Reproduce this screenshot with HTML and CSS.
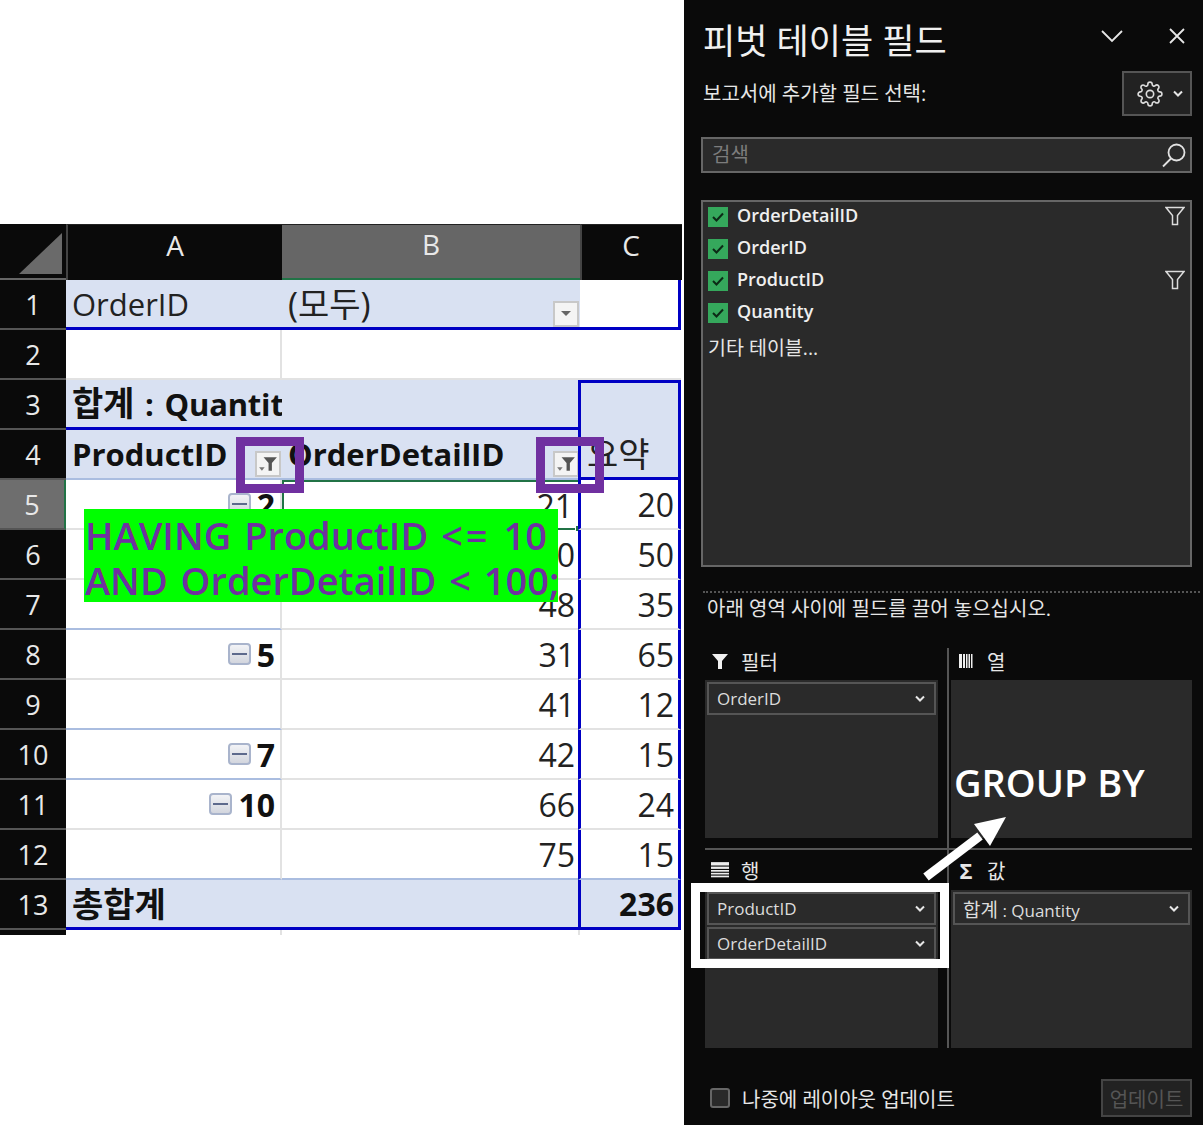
FILE: index.html
```html
<!DOCTYPE html>
<html lang="ko">
<head>
    <meta charset="UTF-8">
    <meta name="viewport" content="width=device-width, initial-scale=1.0">
    <title>피벗 테이블 필드</title>
    <link rel="stylesheet" href="styles.css">
</head>
<body>
    <main class="left">
        <div class="sheet">
            <div class="corner"><svg width="66" height="56" viewBox="0 0 66 56"><polygon points="19,50 62,9 62,50" fill="#6a6a6a"/></svg></div>
            <div class="col-head">A</div>
            <div class="col-head col-on">B</div>
            <div class="col-head col-c">C</div>

            <div class="row-head">1</div>
            <div class="cell tint blue-b">OrderID</div>
            <div class="cell tint blue-b split"><span class="ko">(모두)</span><span class="drop"><svg width="12" height="7" viewBox="0 0 12 7"><polygon points="1,1 11,1 6,6" fill="#666"/></svg></span></div>
            <div class="cell cc blue-b blue-r"></div>

            <div class="row-head">2</div>
            <div class="cell grid-b grid-r"></div>
            <div class="cell grid-b"></div>
            <div class="cell cc grid-b"></div>

            <div class="row-head">3</div>
            <div class="cell tint blue-b bold spaced"><span><span class="ko">합계</span> : Quantit</span></div>
            <div class="cell tint blue-b"></div>
            <div class="cell cc tint blue-t blue-l blue-r"></div>

            <div class="row-head">4</div>
            <div class="cell tint soft-b bold split">ProductID<span class="drop"><svg width="20" height="16" viewBox="0 0 18 14"><polygon points="5,1 17,1 12.5,6 12.5,13 9.5,13 9.5,6" fill="#555"/><polygon points="1,10 6,10 3.5,13" fill="#777"/></svg></span></div>
            <div class="cell tint soft-b bold split">OrderDetailID<span class="drop"><svg width="20" height="16" viewBox="0 0 18 14"><polygon points="5,1 17,1 12.5,6 12.5,13 9.5,13 9.5,6" fill="#555"/><polygon points="1,10 6,10 3.5,13" fill="#777"/></svg></span></div>
            <div class="cell cc tint blue-b blue-l blue-r"><span class="ko">요약</span></div>

            <div class="row-head row-on">5</div>
            <div class="cell num grid-b grid-r"><span class="minus"></span><b>2</b></div>
            <div class="cell num picked">21<span class="handle"></span></div>
            <div class="cell cc num grid-b blue-l blue-r">20</div>

            <div class="row-head">6</div>
            <div class="cell num grid-b grid-r"></div>
            <div class="cell num grid-b">30</div>
            <div class="cell cc num grid-b blue-l blue-r">50</div>

            <div class="row-head">7</div>
            <div class="cell num soft-b grid-r"></div>
            <div class="cell num grid-b">48</div>
            <div class="cell cc num grid-b blue-l blue-r">35</div>

            <div class="row-head">8</div>
            <div class="cell num grid-b grid-r"><span class="minus"></span><b>5</b></div>
            <div class="cell num grid-b">31</div>
            <div class="cell cc num grid-b blue-l blue-r">65</div>

            <div class="row-head">9</div>
            <div class="cell num soft-b grid-r"></div>
            <div class="cell num grid-b">41</div>
            <div class="cell cc num grid-b blue-l blue-r">12</div>

            <div class="row-head">10</div>
            <div class="cell num soft-b grid-r"><span class="minus"></span><b>7</b></div>
            <div class="cell num grid-b">42</div>
            <div class="cell cc num grid-b blue-l blue-r">15</div>

            <div class="row-head">11</div>
            <div class="cell num grid-b grid-r"><span class="minus"></span><b>10</b></div>
            <div class="cell num grid-b">66</div>
            <div class="cell cc num grid-b blue-l blue-r">24</div>

            <div class="row-head">12</div>
            <div class="cell num soft-b grid-r"></div>
            <div class="cell num soft-b">75</div>
            <div class="cell cc num soft-b blue-l blue-r">15</div>

            <div class="row-head">13</div>
            <div class="cell tint blue-b bold total-label"><span class="ko">총합계</span></div>
            <div class="cell cc num tint blue-b blue-l blue-r"><b>236</b></div>

            <div class="row-head stub"></div>
            <div class="cell stub grid-r"></div>
            <div class="cell stub grid-r"></div>
            <div class="cell stub"></div>

            <span class="mark mark-a"></span>
            <span class="mark mark-b"></span>
            <div class="having">HAVING ProductID <span class="op">&lt;=</span> 10
AND OrderDetailID &lt; 100;</div>
        </div>
    </main>

    <aside class="panel">
        <header class="panel-top">
            <h1>피벗 테이블 필드</h1>
            <div class="top-icons">
                <svg width="22" height="14" viewBox="0 0 22 14"><path d="M1 2 L11 12 L21 2" fill="none" stroke="#e6e6e6" stroke-width="1.8"/></svg>
                <svg width="18" height="18" viewBox="0 0 18 18"><path d="M2 2 L16 16 M16 2 L2 16" fill="none" stroke="#e6e6e6" stroke-width="1.8"/></svg>
            </div>
        </header>

        <div class="sub-row">
            <span class="sub-text">보고서에 추가할 필드 선택:</span>
            <div class="gear-btn">
                <svg width="26" height="26" viewBox="0 0 24 24" fill="none" stroke="#dcdcdc" stroke-width="1.5"><circle cx="12" cy="12" r="3.4"/><path d="M19.4 15a1.65 1.65 0 0 0 .33 1.82l.06.06a2 2 0 0 1 0 2.83 2 2 0 0 1-2.83 0l-.06-.06a1.65 1.65 0 0 0-1.82-.33 1.65 1.65 0 0 0-1 1.51V21a2 2 0 0 1-2 2 2 2 0 0 1-2-2v-.09A1.65 1.65 0 0 0 9 19.4a1.65 1.65 0 0 0-1.82.33l-.06.06a2 2 0 0 1-2.83 0 2 2 0 0 1 0-2.83l.06-.06a1.65 1.65 0 0 0 .33-1.82 1.65 1.65 0 0 0-1.51-1H3a2 2 0 0 1-2-2 2 2 0 0 1 2-2h.09A1.65 1.65 0 0 0 4.6 9a1.65 1.65 0 0 0-.33-1.82l-.06-.06a2 2 0 0 1 0-2.83 2 2 0 0 1 2.83 0l.06.06a1.65 1.65 0 0 0 1.82.33H9a1.65 1.65 0 0 0 1-1.51V3a2 2 0 0 1 2-2 2 2 0 0 1 2 2v.09a1.65 1.65 0 0 0 1 1.51 1.65 1.65 0 0 0 1.82-.33l.06-.06a2 2 0 0 1 2.83 0 2 2 0 0 1 0 2.83l-.06.06a1.65 1.65 0 0 0-.33 1.82V9a1.65 1.65 0 0 0 1.51 1H21a2 2 0 0 1 2 2 2 2 0 0 1-2 2h-.09a1.65 1.65 0 0 0-1.51 1z"/></svg>
                <svg class="chev" width="10" height="7" viewBox="0 0 10 7"><path d="M1 1.5 L5 5.5 L9 1.5" fill="none" stroke="#e6e6e6" stroke-width="2"/></svg>
            </div>
        </div>

        <div class="search">
            <span class="search-text">검색</span>
            <svg width="26" height="26" viewBox="0 0 26 26" fill="none" stroke="#e2e2e2" stroke-width="1.8"><circle cx="15.5" cy="10.5" r="8"/><path d="M10 16.5 L2 24.5"/></svg>
        </div>

        <div class="field-list">
            <div class="field"><span class="check"><svg width="14" height="12" viewBox="0 0 14 12"><path d="M2 6 L5.5 9.5 L12 2.5" fill="none" stroke="#0c2a16" stroke-width="2"/></svg></span><span class="field-name">OrderDetailID</span><svg class="funnel" width="20" height="20" viewBox="0 0 20 20"><path d="M1 1.5 H19 L12.5 9.5 V18.5 H7.5 V9.5 Z" fill="none" stroke="#dcdcdc" stroke-width="1.5"/></svg></div>
            <div class="field"><span class="check"><svg width="14" height="12" viewBox="0 0 14 12"><path d="M2 6 L5.5 9.5 L12 2.5" fill="none" stroke="#0c2a16" stroke-width="2"/></svg></span><span class="field-name">OrderID</span></div>
            <div class="field"><span class="check"><svg width="14" height="12" viewBox="0 0 14 12"><path d="M2 6 L5.5 9.5 L12 2.5" fill="none" stroke="#0c2a16" stroke-width="2"/></svg></span><span class="field-name">ProductID</span><svg class="funnel" width="20" height="20" viewBox="0 0 20 20"><path d="M1 1.5 H19 L12.5 9.5 V18.5 H7.5 V9.5 Z" fill="none" stroke="#dcdcdc" stroke-width="1.5"/></svg></div>
            <div class="field"><span class="check"><svg width="14" height="12" viewBox="0 0 14 12"><path d="M2 6 L5.5 9.5 L12 2.5" fill="none" stroke="#0c2a16" stroke-width="2"/></svg></span><span class="field-name">Quantity</span></div>
            <div class="more">기타 테이블...</div>
        </div>

        <div class="dots"></div>
        <p class="hint">아래 영역 사이에 필드를 끌어 놓으십시오.</p>

        <section class="areas">
            <div class="area area-left">
                <div class="area-label"><svg width="18" height="18" viewBox="0 0 18 18"><polygon points="1,2 17,2 11,9 11,17 7,17 7,9" fill="#f0f0f0"/></svg>필터</div>
                <div class="area-box">
                    <div class="pill">OrderID<svg width="10" height="7" viewBox="0 0 10 7"><path d="M1 1.5 L5 5.5 L9 1.5" fill="none" stroke="#e6e6e6" stroke-width="2"/></svg></div>
                </div>
            </div>
            <div class="area">
                <div class="area-label"><svg width="18" height="16" viewBox="0 0 16 16" fill="#eee"><rect x="1" y="1" width="3" height="14"/><rect x="5" y="1" width="2" height="14"/><rect x="8" y="1" width="1.5" height="14"/><rect x="10.5" y="1" width="1.5" height="14"/><rect x="13" y="1" width="1.5" height="14"/></svg>열</div>
                <div class="area-box"></div>
            </div>
            <div class="area-rule"></div>
            <div class="area area-left low">
                <div class="area-label"><svg width="18" height="16" viewBox="0 0 16 14" fill="#eee"><rect x="0" y="0" width="16" height="3"/><rect x="0" y="4" width="16" height="2"/><rect x="0" y="7" width="16" height="1.5"/><rect x="0" y="9.5" width="16" height="1.5"/><rect x="0" y="12" width="16" height="1.5"/></svg>행</div>
                <div class="area-box">
                    <div class="pill">ProductID<svg width="10" height="7" viewBox="0 0 10 7"><path d="M1 1.5 L5 5.5 L9 1.5" fill="none" stroke="#e6e6e6" stroke-width="2"/></svg></div>
                    <div class="pill">OrderDetailID<svg width="10" height="7" viewBox="0 0 10 7"><path d="M1 1.5 L5 5.5 L9 1.5" fill="none" stroke="#e6e6e6" stroke-width="2"/></svg></div>
                </div>
            </div>
            <div class="area low">
                <div class="area-label"><span class="sigma">Σ</span>값</div>
                <div class="area-box">
                    <div class="pill"><span><span class="pill-ko">합계</span> : Quantity</span><svg width="10" height="7" viewBox="0 0 10 7"><path d="M1 1.5 L5 5.5 L9 1.5" fill="none" stroke="#e6e6e6" stroke-width="2"/></svg></div>
                </div>
            </div>
        </section>

        <footer class="panel-foot">
            <span class="later"><span class="empty-check"></span>나중에 레이아웃 업데이트</span>
            <button type="button" class="update">업데이트</button>
        </footer>

        <!-- annotations drawn over the panel -->
        <div class="white-box"></div>
        <svg class="arrow" width="90" height="70" viewBox="0 0 90 70"><path d="M4 65 L58 24" stroke="#fff" stroke-width="9" fill="none"/><polygon points="84,5 52,12 68,34" fill="#fff"/></svg>
        <div class="group-by">GROUP BY</div>
    </aside>
</body>
</html>
```

FILE: styles.css
```css
* {
    box-sizing: border-box;
}
body {
    margin: 0;
    width: 1203px;
    height: 1125px;
    display: flex;
    overflow: hidden;
    background: #fff;
    font-family: "Open Sans", "Noto Sans CJK KR", sans-serif;
}

/* spreadsheet */
.left {
    width: 684px;
    padding-top: 224px;
}
.sheet {
    position: relative;
    display: grid;
    grid-template-columns: 66px 216px 298px 102px;
    grid-template-rows: 56px repeat(13, 50px) 5px;
    font-size: 31px;
    color: #222;
}
.corner {
    background: #0a0a0a;
    border-bottom: 2px solid #666;
    height: 56px;
}
.corner svg {
    display: block;
}
.col-head {
    background: #0a0a0a;
    color: #e8e8e8;
    font-size: 28px;
    border-left: 2px solid #444;
    display: flex;
    align-items: center;
    justify-content: center;
    padding-bottom: 15px;
    border-top: 1px solid #222;
}
.col-on {
    background: #666;
    border-left: 0;
    border-bottom: 2px solid #217346;
}
.col-c {
    padding-right: 2px;
    padding-left: 0;
}
.row-head {
    background: #0a0a0a;
    color: #e8e8e8;
    font-size: 27px;
    display: flex;
    align-items: center;
    justify-content: center;
    border-bottom: 2px solid #555;
}
.row-on {
    background: #6e6e6e;
    border-right: 2px solid #217346;
}
.cell {
    display: flex;
    align-items: center;
    padding: 0 5px 0 6px;
    white-space: nowrap;
    overflow: hidden;
    min-width: 0;
    position: relative;
}
.ko {
    font-size: 34px;
    line-height: 1;
}
.tint {
    background: #d9e1f2;
}
.bold {
    font-weight: 700;
    color: #111;
}
.spaced {
    word-spacing: 3px;
    letter-spacing: -0.2px;
}
.split {
    justify-content: space-between;
    padding-right: 1px;
}
.num {
    justify-content: flex-end;
    padding-right: 5px;
    font-size: 32px;
}
.num b {
    font-weight: 700;
    color: #111;
}
.cc {
    margin-right: 1px;
}
.cc.num {
    padding-right: 4px;
}
.cc.blue-l {
    margin-left: -2px;
}
.total-label {
    grid-column: span 2;
}
.blue-b {
    border-bottom: 3px solid #0000c4;
}
.blue-t {
    border-top: 3px solid #0000c4;
}
.blue-l {
    border-left: 3px solid #0000c4;
}
.blue-r {
    border-right: 3px solid #0000c4;
}
.grid-b {
    border-bottom: 2px solid #e2e2e2;
}
.grid-r {
    border-right: 2px solid #e2e2e2;
}
.soft-b {
    border-bottom: 2px solid #aabde0;
}
.picked {
    border: 2px solid #217346;
    padding-right: 5px;
    overflow: visible;
}
.handle {
    position: absolute;
    right: -4px;
    bottom: -4px;
    width: 7px;
    height: 7px;
    background: #217346;
    border: 1px solid #fff;
}
.drop {
    width: 26px;
    height: 26px;
    margin-top: 20px;
    flex: none;
    background: #f4f4f4;
    border: 2px solid #c8c8c8;
    display: flex;
    align-items: center;
    justify-content: center;
}
.minus {
    width: 23px;
    height: 22px;
    margin-right: 6px;
    border: 2px solid #a9b4cc;
    border-radius: 4px;
    background: linear-gradient(#f2f3f6, #d3d6de);
    display: flex;
    align-items: center;
    justify-content: center;
}
.minus::before {
    content: "";
    width: 15px;
    height: 2px;
    background: #5d6a8c;
}
.stub {
    padding: 0;
    border-bottom: 0;
}
.row-head.stub {
    background: #0a0a0a;
}
.mark {
    position: absolute;
    top: 213px;
    width: 68px;
    height: 56px;
    border: 9px solid #7030a0;
}
.mark-a {
    left: 236px;
}
.mark-b {
    left: 536px;
}
.having {
    position: absolute;
    left: 84px;
    top: 285px;
    width: 474px;
    height: 93px;
    background: #00ff00;
    color: #7030a0;
    font-size: 38px;
    font-weight: 600;
    line-height: 45px;
    word-spacing: 3px;
    padding: 4px 0 0 1px;
    white-space: pre;
}
.op {
    letter-spacing: 3px;
}

/* field panel */
.panel {
    position: relative;
    width: 519px;
    padding: 18px 11px 0 17px;
    background: #0a0a0a;
    color: #e6e6e6;
    font-size: 20px;
}
.panel-top {
    height: 42px;
    display: flex;
    align-items: center;
    justify-content: space-between;
}
.panel-top h1 {
    margin: 0;
    padding: 3px 0 0 2px;
    font-size: 35px;
    line-height: 42px;
    font-weight: 400;
    color: #f0f0f0;
}
.top-icons {
    display: flex;
    align-items: center;
    gap: 45px;
    padding: 0 6px 6px 0;
}
.top-icons svg {
    display: block;
}
.sub-row {
    margin-top: 11px;
    height: 45px;
    display: flex;
    align-items: center;
    justify-content: space-between;
    padding-left: 2px;
}
.sub-text {
    padding-bottom: 2px;
}
.gear-btn {
    width: 70px;
    height: 45px;
    border: 2px solid #555;
    background: #222;
    display: flex;
    align-items: center;
    padding-left: 13px;
    gap: 10px;
}
.search {
    margin-top: 21px;
    height: 36px;
    background: #2a2a2a;
    border: 2px solid #666;
    display: flex;
    align-items: center;
    justify-content: space-between;
    padding: 0 3px 0 9px;
    color: #7c7c7c;
}
.search-text {
    padding-bottom: 4px;
}
.field-list {
    margin-top: 27px;
    height: 367px;
    background: #2a2a2a;
    border: 2px solid #666;
    padding: 0 5px;
}
.field {
    height: 32px;
    display: flex;
    align-items: center;
    position: relative;
    top: -1px;
}
.check {
    width: 20px;
    height: 20px;
    background: #35a85c;
    display: flex;
    align-items: center;
    justify-content: center;
    margin-right: 9px;
}
.field-name {
    font-weight: 600;
    font-size: 18px;
    color: #efefef;
    padding-bottom: 4px;
}
.funnel {
    margin-left: auto;
    margin-bottom: 2px;
}
.more {
    height: 34px;
    line-height: 36px;
    font-size: 19.5px;
}
.dots {
    margin: 24px -8px 0 2px;
    border-top: 2px dotted #555;
}
.hint {
    margin: 0;
    padding-left: 6px;
    height: 30px;
    line-height: 32px;
}
.areas {
    margin: 25px 0 0 4px;
    display: grid;
    grid-template-columns: 244px 243px;
}
.area {
    padding-left: 2px;
    padding-bottom: 10px;
}
.area-left {
    padding: 0 9px 10px 0;
    border-right: 2px solid #555;
}
.area.low {
    padding-bottom: 0;
}
.area-label {
    height: 32px;
    display: flex;
    align-items: center;
    gap: 12px;
    padding-left: 6px;
    padding-bottom: 6px;
}
.low .area-label {
    height: 40px;
    padding-bottom: 0;
}
.sigma {
    width: 18px;
    font-weight: 700;
    font-size: 22px;
    text-align: center;
}
.area-box {
    height: 158px;
    background: #2a2a2a;
    padding: 2px;
}
.area-rule {
    grid-column: span 2;
    height: 2px;
    background: #555;
}
.pill {
    height: 33px;
    margin-bottom: 2px;
    border: 2px solid #555;
    display: flex;
    align-items: center;
    justify-content: space-between;
    padding: 0 9px 0 8px;
    color: #dcdcdc;
    font-size: 17px;
}
.pill-ko {
    font-size: 19px;
}
.panel-foot {
    margin: 31px 0 0;
    height: 38px;
    display: flex;
    align-items: center;
    justify-content: space-between;
    padding-left: 9px;
}
.later {
    display: flex;
    align-items: center;
    gap: 12px;
}
.empty-check {
    width: 20px;
    height: 20px;
    background: #2a2a2a;
    border: 2px solid #666;
    border-radius: 3px;
}
.update {
    width: 91px;
    height: 38px;
    padding: 0;
    background: #222;
    border: 2px solid #444;
    color: #555;
    font: inherit;
}
.white-box {
    position: absolute;
    left: 7px;
    top: 883px;
    width: 258px;
    height: 85px;
    border: 9px solid #fff;
}
.arrow {
    position: absolute;
    left: 238px;
    top: 812px;
}
.group-by {
    position: absolute;
    left: 270px;
    top: 756px;
    font-size: 38px;
    font-weight: 600;
    line-height: 52px;
    color: #fff;
    white-space: nowrap;
}
```
